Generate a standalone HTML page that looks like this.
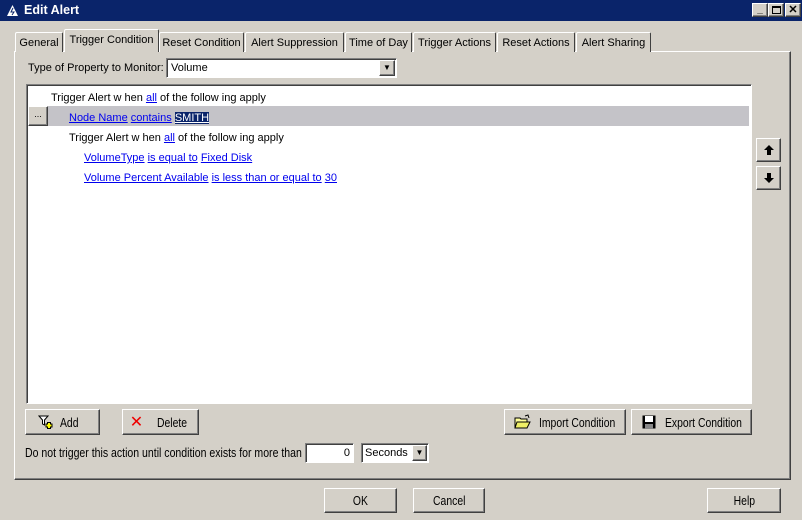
<!DOCTYPE html>
<html><head><meta charset="utf-8"><style>
*{box-sizing:border-box;margin:0;padding:0}
body{width:802px;height:520px;background:#d4d0c8;font-family:"Liberation Sans",sans-serif;font-size:11px;color:#000;position:relative;overflow:hidden}
.a{position:absolute}
.rz{border:1px solid;border-color:#fff #404040 #404040 #fff;box-shadow:inset -1px -1px 0 #808080;background:#d4d0c8}
.sk{border:1px solid;border-color:#808080 #fff #fff #808080;box-shadow:inset 1px 1px 0 #404040;background:#fff}
.tab{position:absolute;top:32px;height:20px;border:1px solid;border-bottom:none;border-color:#fff #404040 #404040 #fff;border-radius:2px 2px 0 0;padding:4px 0 0;text-align:center;font-size:11px;background:#d4d0c8;white-space:nowrap}
.btn{position:absolute;display:flex;align-items:center;justify-content:center;font-size:13px;white-space:nowrap}
.c{display:inline-block;transform:scaleX(0.8);transform-origin:left center}
.cc{display:inline-block;transform:scaleX(0.8);transform-origin:center}
a{color:#0000ee;text-decoration:underline}
.l{position:absolute;white-space:nowrap;font-size:11px}
</style></head><body>
<div class="a" style="left:0;top:0;width:802px;height:21px;background:#0a246a"></div>
<svg class="a" style="left:6px;top:4px" width="13" height="13"><path d="M6.5 1L12 12H1z" fill="#fff"/><path d="M7 4L5 8h3l-2 3" stroke="#0a246a" fill="none"/></svg>
<div class="a" style="left:24px;top:3px;color:#fff;font-weight:bold;font-size:12.5px">Edit Alert</div>
<div class="a rz" style="left:752px;top:3px;width:16px;height:14px;font-size:10px;text-align:center;line-height:12px;font-weight:bold">_</div>
<div class="a rz" style="left:768px;top:3px;width:16px;height:14px"><div class="a" style="left:3px;top:2px;width:9px;height:8px;border:1px solid #000;border-top-width:2px"></div></div>
<div class="a rz" style="left:785px;top:3px;width:16px;height:14px;font-size:11px;text-align:center;line-height:12px;font-weight:bold">✕</div>

<div class="a" style="left:14px;top:51px;width:777px;height:429px;border:1px solid;border-color:#fff #404040 #404040 #fff;box-shadow:inset -1px -1px 0 #808080"></div>
<div class="tab" style="left:15px;width:48px">General</div>
<div class="tab" style="left:64px;top:29px;height:23px;width:95px;z-index:2">Trigger Condition</div>
<div class="tab" style="left:159px;width:85px">Reset Condition</div>
<div class="tab" style="left:245px;width:99px">Alert Suppression</div>
<div class="tab" style="left:345px;width:67px">Time of Day</div>
<div class="tab" style="left:413px;width:83px">Trigger Actions</div>
<div class="tab" style="left:497px;width:78px">Reset Actions</div>
<div class="tab" style="left:576px;width:75px">Alert Sharing</div>

<div class="l" style="left:28px;top:62px">Type of Property to Monitor:</div>
<div class="a sk" style="left:166px;top:58px;width:231px;height:20px"><span class="a" style="left:4px;top:3px">Volume</span>
<div class="a rz" style="right:1px;top:1px;width:16px;height:16px;font-size:8px;text-align:center;line-height:14px">▼</div></div>

<div class="a sk" style="left:26px;top:84px;width:726px;height:320px"></div>
<div class="a" style="left:28px;top:106px;width:721px;height:20px;background:#c4c3c8"></div>
<div class="a rz" style="left:28px;top:106px;width:20px;height:20px;text-align:center;font-size:9px;line-height:14px">...</div>
<div class="l" style="left:51px;top:92px">Trigger Alert w hen <a>all</a> of the follow ing apply</div>
<div class="l" style="left:69px;top:112px"><a>Node Name</a> <a>contains</a> <a style="background:#0a246a;color:#fff">SMITH</a></div>
<div class="l" style="left:69px;top:132px">Trigger Alert w hen <a>all</a> of the follow ing apply</div>
<div class="l" style="left:84px;top:152px"><a>VolumeType</a> <a>is equal to</a> <a>Fixed Disk</a></div>
<div class="l" style="left:84px;top:172px"><a>Volume Percent Available</a> <a>is less than or equal to</a> <a>30</a></div>

<div class="a rz" style="left:756px;top:138px;width:25px;height:24px"><svg class="a" style="left:6px;top:5px" width="12" height="12"><path d="M6 1L1 6h3v5h4V6h3z" fill="#000"/></svg></div>
<div class="a rz" style="left:756px;top:166px;width:25px;height:24px"><svg class="a" style="left:6px;top:5px" width="12" height="12"><path d="M6 11L1 6h3V1h4v5h3z" fill="#000"/></svg></div>

<div class="rz btn" style="left:25px;top:409px;width:75px;height:26px"><svg width="16" height="16" style="margin-right:6px"><path d="M1 2h9l-3.5 4v5l-2-1V6z" fill="#fff" stroke="#000"/><path d="M11 8v7M7.5 11.5h7" stroke="#000" stroke-width="4"/><path d="M11 9v5M8.5 11.5h5" stroke="#ff0" stroke-width="2"/></svg><span style="width:28px"><span class="c">Add</span></span></div>
<div class="rz btn" style="left:122px;top:409px;width:77px;height:26px"><span style="color:#e00;font-size:16px;margin-right:14px">✕</span><span style="width:34px"><span class="c">Delete</span></span></div>
<div class="rz btn" style="left:504px;top:409px;width:122px;height:26px"><svg width="18" height="16" style="margin-right:7px"><path d="M1 4h5l1 1h6v9H1z" fill="#ff9" stroke="#000"/><path d="M3 8h13l-3 6H1z" fill="#ee6" stroke="#000"/><path d="M11 2l3-1 1 3" fill="none" stroke="#000"/></svg><span style="width:78px"><span class="c">Import Condition</span></span></div>
<div class="rz btn" style="left:631px;top:409px;width:121px;height:26px"><svg width="14" height="14" style="margin-right:9px"><rect x="0.5" y="0.5" width="13" height="13" fill="#000"/><rect x="3" y="1" width="8" height="6" fill="#fff"/><rect x="3" y="9" width="8" height="5" fill="#888"/></svg><span style="width:76px"><span class="c">Export Condition</span></span></div>

<div class="l" style="left:25px;top:445px;font-size:13px"><span class="c" style="transform:scaleX(0.81)">Do not trigger this action until condition exists for more than</span></div>
<div class="a sk" style="left:305px;top:443px;width:49px;height:20px"><span class="a" style="right:3px;top:3px">0</span></div>
<div class="a sk" style="left:361px;top:443px;width:68px;height:20px"><span class="a" style="left:3px;top:3px">Seconds</span>
<div class="a rz" style="right:1px;top:1px;width:15px;height:16px;font-size:8px;text-align:center;line-height:14px">▼</div></div>

<div class="rz btn" style="left:324px;top:488px;width:73px;height:25px"><span class="cc">OK</span></div>
<div class="rz btn" style="left:413px;top:488px;width:72px;height:25px"><span class="cc">Cancel</span></div>
<div class="rz btn" style="left:707px;top:488px;width:74px;height:25px"><span class="cc">Help</span></div>
</body></html>
